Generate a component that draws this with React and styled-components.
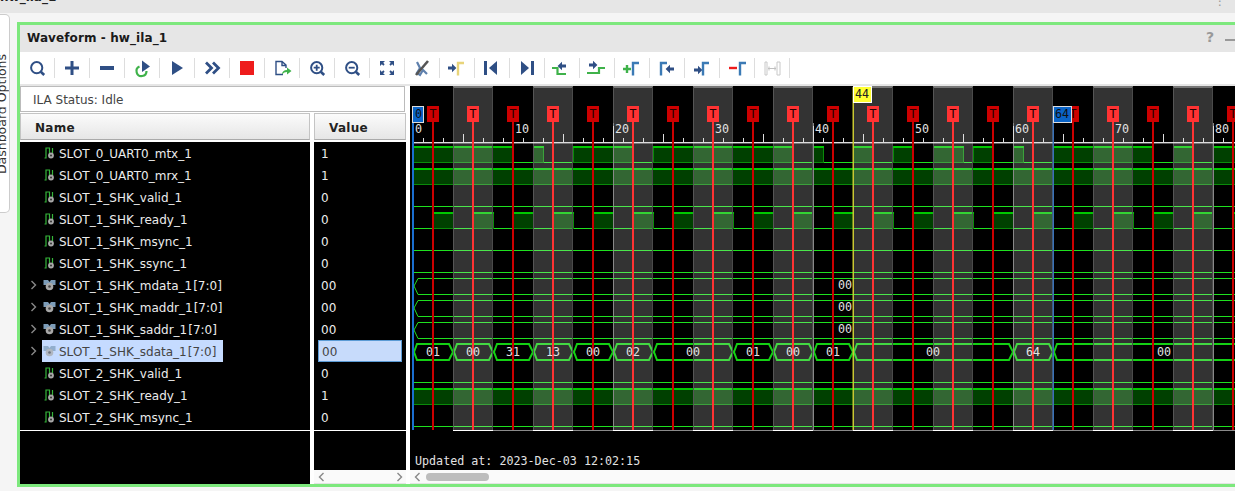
import React from 'react'
import styled, {createGlobalStyle} from 'styled-components'

const GlobalStyle = createGlobalStyle`
    html, body {
        margin: 0;
        padding: 0;
        background: #f5f5f5;
    }
`;

const NAVY = '#2f4f85';
const BLUE = '#3b7ab5';
const GREEN = '#3fb24a';

const Page = styled.div`
    width: 1235px;
    height: 491px;
    overflow: hidden;
    background: #f5f5f5;
    font-family: "DejaVu Sans", sans-serif;
    font-size: 12px;
`;

const TopStrip = styled.div`
    height: 13px;
    background: #e6e6e6;
    overflow: hidden;
    display: flex;
    justify-content: space-between;
`;

const StripTitle = styled.div`
    margin-top: -10px;
    font-weight: bold;
    font-size: 12px;
    line-height: 15px;
    color: #222;
`;

const Kebab = styled.div`
    margin: -6px 9px 0 0;
    color: #999;
    font-size: 12px;
    line-height: 14px;
`;

const Main = styled.div`
    display: flex;
    margin-top: 1px;
`;

const SideTab = styled.div`
    flex: none;
    width: 9px;
    height: 197px;
    background: #fff;
    border: 1px solid #ccc;
    border-left: none;
    border-top-right-radius: 5px;
    border-bottom-right-radius: 5px;
    overflow: hidden;
`;

const SideLabel = styled.div`
    writing-mode: vertical-rl;
    transform: rotate(180deg);
    margin: 39px 0 0 -4px;
    font-size: 12.5px;
    line-height: 12px;
    color: #333;
    white-space: nowrap;
`;

const Panel = styled.div`
    flex: none;
    margin: 8px 0 0 7px;
    width: 1216px;
    height: 459px;
    border: 3px solid #7de87d;
    display: flex;
    flex-direction: column;
    background: #fafafa;
`;

const TitleBar = styled.div`
    height: 27px;
    background: #e6e6e6;
    display: flex;
    justify-content: space-between;
    align-items: center;
    padding: 0 0 1px 7px;
    box-sizing: border-box;
`;

const PanelTitle = styled.div`
    font-weight: bold;
    font-size: 12px;
    letter-spacing: 0.1px;
    color: #1a1a1a;
`;

const WindowButtons = styled.div`
    display: flex;
    align-items: center;
    gap: 11px;
    margin: 0 1px 2px 0;
`;

const Help = styled.span`
    font-weight: bold;
    font-size: 14px;
    color: #999;
`;

const Minimize = styled.span`
    display: block;
    width: 10px;
    height: 2px;
    margin-top: 6px;
    background: #999;
`;

const Toolbar = styled.div`
    height: 32px;
    background: #fff;
    border-bottom: 2px solid #e6e6e6;
    display: flex;
    align-items: center;
`;

const ToolButton = styled.div`
    width: 34px;
    height: 20px;
    border-right: 1px solid #ddd;
    display: flex;
    justify-content: center;
    align-items: center;
`;

const Body = styled.div`
    flex: 1;
    display: flex;
    min-height: 0;
    background: #fff;
`;

const LeftPane = styled.div`
    flex: none;
    width: 386px;
    margin-right: 4px;
    display: flex;
    flex-direction: column;
`;

const StatusBox = styled.div`
    width: 371px;
    height: 24px;
    border: 1px solid #bbb;
    background: #fff;
    padding-left: 12px;
    margin-bottom: 1px;
    line-height: 27px;
    color: #444;
    font-size: 12px;
`;

const Columns = styled.div`
    flex: 1;
    display: flex;
    gap: 4px;
    min-height: 0;
`;

const Column = styled.div`
    width: ${p => p.$width}px;
    display: flex;
    flex-direction: column;
`;

const ColumnHeader = styled.div`
    height: 27px;
    box-sizing: border-box;
    border: 1px solid #c4c4c4;
    border-bottom-color: #aaa;
    background: linear-gradient(#fbfbfb, #e6e6e6);
    padding-left: ${p => p.$inset}px;
    line-height: 28px;
    font-weight: bold;
    font-size: 12px;
    letter-spacing: 0.3px;
    color: #222;
    margin-bottom: 2px;
`;

const Rows = styled.div`
    flex: 1;
    background: #000;
    display: flex;
    flex-direction: column;
    min-height: 0;
`;

const RowStack = styled.div`
    height: 288px;
    flex: none;
    border-bottom: 1px solid #fff;
`;

const NameRow = styled.div`
    height: 22px;
    display: flex;
    align-items: stretch;
    padding-left: 10px;
`;

const Expander = styled.div`
    width: 12px;
    flex: none;
    display: flex;
    align-items: center;
`;

const NameChip = styled.div`
    display: flex;
    align-items: center;
    width: ${p => (p.$selected ? '181px' : 'auto')};
    padding-left: ${p => (p.$bus ? '1px' : '2px')};
    box-sizing: border-box;
    background: ${p => (p.$selected ? '#c5dbff' : 'transparent')};
`;

const SignalName = styled.span`
    margin-left: 3px;
    padding-top: 2px;
    font-size: 12px;
    line-height: 20px;
    white-space: nowrap;
    color: ${p => (p.$selected ? '#444' : '#ececec')};
`;

const Range = styled.span`
    margin-left: 1px;
`;

const ValueRow = styled.div`
    height: 22px;
    box-sizing: border-box;
    margin-left: ${p => (p.$selected ? '4px' : '0')};
    width: ${p => (p.$selected ? '84px' : 'auto')};
    padding-left: ${p => (p.$selected ? '3px' : '7px')};
    padding-top: ${p => (p.$selected ? '1px' : '2px')};
    background: ${p => (p.$selected ? '#c7dbfb' : 'transparent')};
    border: ${p => (p.$selected ? '1px solid #5b9bd5' : 'none')};
    line-height: 20px;
    font-size: 12px;
    color: ${p => (p.$selected ? '#444' : '#ececec')};
`;

const ScrollBar = styled.div`
    flex: none;
    height: 14px;
    box-sizing: border-box;
    background: #fafafa;
    border-bottom: 1px solid #e4e4e4;
    display: flex;
    align-items: center;
    gap: 5px;
    padding: 0 3px 0 4px;
    justify-content: ${p => (p.$spread ? 'space-between' : 'flex-start')};
`;

const ScrollThumb = styled.div`
    width: 63px;
    height: 8px;
    border-radius: 4px;
    background: #bdbdbd;
`;

const WavePane = styled.div`
    flex: 1;
    display: flex;
    flex-direction: column;
    min-width: 0;
`;

const WaveSvg = styled.svg`
    display: block;
    flex: none;
    background: #000;
`;

const WaveText = styled.text`
    font-family: "DejaVu Sans Mono", monospace;
    font-size: 11.7px;
    fill: ${p => p.$fill || '#e2e2e2'};
`;

// toolbar icons, 20x20 each
const Icon = ({children}) => <svg width="20" height="20" viewBox="0 0 20 20" fill="none">{children}</svg>;

const Lens = ({children}) => (
    <Icon>
        <circle cx="9.7" cy="9.7" r="5.6" stroke={NAVY} strokeWidth="2"/>
        <path d="M13.8 13.8L17.2 17" stroke={NAVY} strokeWidth="2.6"/>
        {children}
    </Icon>
);

const Edge = ({x, color = BLUE}) => <path d={`M${x} 17.5V5H${x + 6}`} stroke={color} strokeWidth="2.4"/>;
const ArrowRight = ({x, y}) => <path d={`M${x} ${y - 1.6}h4v-2.6l4.4 4.2l-4.4 4.2v-2.6h-4z`} fill={NAVY}/>;
const ArrowLeft = ({x, y}) => <path d={`M${x} ${y - 1.6}h-4v-2.6l-4.4 4.2l4.4 4.2v-2.6h4z`} fill={NAVY}/>;

const toolIcons = [
    <Lens />,
    <Icon><path d="M3 10h14M10 3v14" stroke={NAVY} strokeWidth="3"/></Icon>,
    <Icon><path d="M3 10h14" stroke={NAVY} strokeWidth="4"/></Icon>,
    <Icon>
        <path d="M7.5 8.5a5 5 0 1 0 7 4.5" stroke={GREEN} strokeWidth="2.2"/>
        <path d="M10 2.500L18 8.500L10 14z" fill={NAVY}/>
    </Icon>,
    <Icon><path d="M5 3l11 7l-11 7z" fill={NAVY}/></Icon>,
    <Icon><path d="M4 4.500l5.500 5.500l-5.500 5.500M11 4.500l5.500 5.500l-5.500 5.500" stroke={NAVY} strokeWidth="2.800"/></Icon>,
    <Icon><rect x="3" y="3" width="14" height="14" fill="#ee1c1c"/></Icon>,
    <Icon>
        <path d="M14 10V7L10 3.500H4v13h7M10 3.500v4h4" stroke={NAVY} strokeWidth="1.400"/>
        <path d="M10 16.500c0-3 2-4.500 5-4.500V9.500l4.500 3.500L15 16.500v-2.500c-2 0-3.500 .8-5 2.500z" fill={GREEN}/>
    </Icon>,
    <Lens><path d="M6.700 9.700h6M9.700 6.700v6" stroke={NAVY} strokeWidth="1.800"/></Lens>,
    <Lens><path d="M6.700 9.700h6" stroke={NAVY} strokeWidth="1.800"/></Lens>,
    <Icon>
        <path d="M3 8V3h5zM17 8V3h-5zM3 12v5h5zM17 12v5h-5z" fill={NAVY}/>
        <path d="M4 4l3 3M16 4l-3 3M4 16l3-3M16 16l-3-3" stroke={NAVY} strokeWidth="1.800"/>
    </Icon>,
    <Icon>
        <path d="M5 4l3 6l-3 5l3 2l3-5l4 4" stroke="#5f80ad" strokeWidth="2.200"/>
        <path d="M4 17L16 3" stroke="#555" strokeWidth="2.600"/>
    </Icon>,
    <Icon><ArrowRight x={1} y={10}/><Edge x={11} color="#e8d47a"/></Icon>,
    <Icon>
        <rect x="2" y="3" width="3" height="14" fill={NAVY}/>
        <path d="M15 3v14l-8-7z" fill={NAVY}/>
    </Icon>,
    <Icon>
        <path d="M4 3v14l8-7z" fill={NAVY}/>
        <rect x="14" y="3" width="3" height="14" fill={NAVY}/>
    </Icon>,
    <Icon>
        <path d="M0 10h5.500v6H14" stroke={GREEN} strokeWidth="2.200"/>
        <ArrowLeft x={14} y={8}/>
    </Icon>,
    <Icon>
        <path d="M0 15h12v-5h6" stroke={GREEN} strokeWidth="2.200"/>
        <ArrowRight x={2} y={7}/>
    </Icon>,
    <Icon><path d="M1 11h8M5 7v8" stroke={GREEN} strokeWidth="2.400"/><Edge x={11}/></Icon>,
    <Icon><Edge x={4}/><ArrowLeft x={17} y={11}/></Icon>,
    <Icon><ArrowRight x={2} y={12}/><Edge x={11}/></Icon>,
    <Icon><path d="M2 10h8" stroke="#ee1c1c" strokeWidth="2.400"/><Edge x={13}/></Icon>,
    <Icon>
        <path d="M3 4h2v13H3zM15 4h3v13h-3z" stroke="#c8c8c8" strokeWidth="1"/>
        <path d="M6 10.500h8M7 8.500v4M13 8.500v4" stroke="#c0c0c0"/>
    </Icon>,
];

const SignalIcon = () => (
    <svg width="12" height="14" viewBox="0 0 12 14" fill="none">
        <path d="M0.500 12h1.500V2h3.500v5.500M8.500 2v5.500" stroke="#35b53a" strokeWidth="1.200"/>
        <circle cx="7" cy="9.500" r="2.900" fill="#a8a8a8"/>
        <circle cx="7" cy="9.500" r="1" fill="#333"/>
    </svg>
);

const BusIcon = ({selected}) => (
    <svg width="13" height="14" viewBox="0 0 13 14" fill="none" opacity={selected ? 0.7 : 1}>
        <path d="M0.500 2h4.500l1.500 2l1.500-2h4.500v5h-12z" fill="#7c9cb8"/>
        <circle cx="6.500" cy="8.500" r="3.800" fill="#a8a8a8"/>
        <circle cx="6.500" cy="8.500" r="1.300" fill="#444"/>
    </svg>
);

const Chevron = ({left, color = '#888', size = 7}) => (
    <svg width={size} height={size + 3} viewBox="0 0 7 10" fill="none">
        <path d={left ? 'M5.500 1L1.500 5l4 4' : 'M1.500 1l4 4l-4 4'} stroke={color} strokeWidth="1.400"/>
    </svg>
);

const signals = [
    {name: 'SLOT_0_UART0_mtx_1', value: '1'},
    {name: 'SLOT_0_UART0_mrx_1', value: '1'},
    {name: 'SLOT_1_SHK_valid_1', value: '0'},
    {name: 'SLOT_1_SHK_ready_1', value: '0'},
    {name: 'SLOT_1_SHK_msync_1', value: '0'},
    {name: 'SLOT_1_SHK_ssync_1', value: '0'},
    {name: 'SLOT_1_SHK_mdata_1', range: '[7:0]', value: '00'},
    {name: 'SLOT_1_SHK_maddr_1', range: '[7:0]', value: '00'},
    {name: 'SLOT_1_SHK_saddr_1', range: '[7:0]', value: '00'},
    {name: 'SLOT_1_SHK_sdata_1', range: '[7:0]', value: '00', selected: true},
    {name: 'SLOT_2_SHK_valid_1', value: '0'},
    {name: 'SLOT_2_SHK_ready_1', value: '1'},
    {name: 'SLOT_2_SHK_msync_1', value: '0'},
];

// waveform data, x values are page pixels (10px per sample, sample 0 at 413)
const END = 1240;
const range = (n, f) => Array.from({length: n}, (_, i) => f(i));

const digital = [
    [[413, 513], [533, 543], [573, 633], [653, 793], [813, 823], [853, 873], [893, 913], [933, 963],
        [973, 993], [1013, 1023], [1053, 1153], [1173, 1193], [1213, END]],
    [[413, END]],
    [],
    range(21, i => [433 + 40 * i, 453 + 40 * i]),
    [],
    [],
];
const lateRows = {10: [], 11: [[413, END]], 12: []};

const sdata = [
    [413, 453, '01'], [453, 493, '00'], [493, 533, '31'], [533, 573, '13'], [573, 613, '00'],
    [613, 653, '02'], [653, 733, '00'], [733, 773, '01'], [773, 813, '00'], [813, 853, '01'],
    [853, 1013, '00'], [1013, 1053, '64'], [1053, 1275, '00'],
];

const DigitalRow = ({row, highs}) => {
    const top = 146 + row * 22;
    const bottom = top + 16;
    return (
        <g>
            <path d={`M414 ${bottom + 0.5}H${END}`} stroke="#1fe01f"/>
            {highs.map(([a, b]) => (
                <g key={a}>
                    <rect x={a + 0.5} y={top + 0.5} width={b - a} height={16} fill="#004000" stroke="#0a8a0a"/>
                    <path d={`M${a} ${top + 1}H${b + 1}`} stroke="#00c800" strokeWidth="2"/>
                </g>
            ))}
        </g>
    );
};

const Waveform = () => (
    <WaveSvg width="825" height="384" viewBox="410 86 825 384" shapeRendering="crispEdges">
        {digital.map((highs, i) => <DigitalRow key={i} row={i} highs={highs}/>)}
        {Object.keys(lateRows).map(r => <DigitalRow key={r} row={Number(r)} highs={lateRows[r]}/>)}

        {[6, 7, 8].map(r => {
            const top = 146 + r * 22;
            return (
                <path key={r} shapeRendering="auto" fill="none" stroke="#1fe01f"
                    d={`M${END} ${top + 0.5}H418L414 ${top + 8}L418 ${top + 16.5}H${END}`}/>
            );
        })}
        {sdata.map(([a, b]) => (
            <path key={a} shapeRendering="auto" fill="none" stroke="#14d014" strokeWidth="2"
                d={`M${a + 1} 352L${a + 4} 344H${b - 4}L${b} 352L${b - 4} 360H${a + 4}z`}/>
        ))}

        {/* shaded sample bands sit over the traces */}
        {range(10, i => (
            <g key={i}>
                <rect x={453 + 80 * i} y={86} width={40} height={344} fill="rgba(255,255,255,0.2)"/>
                <rect x={453 + 80 * i} y={86} width={40} height={1.500} fill="#777"/>
                <rect x={453 + 80 * i} y={87} width={1} height={343} fill="#555"/>
                <rect x={492 + 80 * i} y={87} width={1} height={343} fill="#4a4a4a"/>
                <rect x={453 + 80 * i} y={430} width={40} height={1} fill="#fff"/>
                <rect x={493 + 80 * i} y={430} width={40} height={1} fill="#8a8a8a"/>
            </g>
        ))}
        {[613, 813, 1013, 1213].map(x => <rect key={x} x={x} y={123} width={1} height={307} fill="#888"/>)}

        {/* ruler */}
        <rect x={413} y={142} width={822} height={1.400} fill="#ddd" shapeRendering="auto"/>
        {range(83, i => {
            const x = 413 + 10 * i;
            if (i % 10 === 0) return <rect key={i} x={x} y={126} width={1} height={16} fill="#ddd"/>;
            if (i % 5 === 0) return <rect key={i} x={x} y={134} width={1} height={8} fill="#ddd"/>;
            if (i % 2 === 1) return <rect key={i} x={x} y={138} width={1} height={4} fill="#ddd"/>;
            return null;
        })}
        {range(9, i => <WaveText key={i} x={415 + 100 * i} y={133}>{i * 10}</WaveText>)}

        {/* trigger markers */}
        {range(21, i => {
            const x = 433 + 40 * i;
            const color = i % 2 ? '#ff3333' : '#cc0000';
            return (
                <g key={i}>
                    <rect x={x - 1} y={122} width={2} height={308} fill={color}/>
                    <rect x={x - 6} y={106} width={12} height={16} fill={color}/>
                    <WaveText x={x - 3.500} y={118} $fill="#200">T</WaveText>
                </g>
            );
        })}

        {/* cursors */}
        <rect x={852.500} y={87} width={1.500} height={343} fill="#c8c832" shapeRendering="auto"/>
        <rect x={853} y={86} width={18} height={16} fill="#ffff33" stroke="#fff"/>
        <WaveText x={855} y={98} $fill="#222">44</WaveText>
        <rect x={1052.500} y={106} width={1.500} height={324} fill="#3a72b8" shapeRendering="auto"/>
        <rect x={1053} y={106} width={18} height={16} fill="#0a64c8" stroke="#ddd"/>
        <WaveText x={1055} y={118} $fill="#111">64</WaveText>
        <rect x={412} y={122} width={2} height={308} fill="#1a6fd0"/>
        <rect x={412.500} y={106} width={11} height={16} fill="#0a64c8" stroke="#ddd"/>
        <WaveText x={415} y={118} $fill="#111">0</WaveText>

        {/* bus values */}
        {[285, 307, 329].map(y => <WaveText key={y} x={838} y={y + 4}>00</WaveText>)}
        {sdata.map(([a, b, label]) => {
            const mid = b > END ? 1164 : (a + b) / 2;
            return <WaveText key={a} x={mid} y={356} textAnchor="middle">{label}</WaveText>;
        })}

        <WaveText x={415} y={465}>Updated at: 2023-Dec-03 12:02:15</WaveText>
    </WaveSvg>
);

class App extends React.Component{
    render(){
        return(
            <Page>
                <GlobalStyle />
                <TopStrip>
                    <StripTitle>hw_ila_1</StripTitle>
                    <Kebab>⋮</Kebab>
                </TopStrip>
                <Main>
                    <SideTab>
                        <SideLabel>Dashboard Options</SideLabel>
                    </SideTab>
                    <Panel>
                        <TitleBar>
                            <PanelTitle>Waveform - hw_ila_1</PanelTitle>
                            <WindowButtons>
                                <Help>?</Help>
                                <Minimize />
                            </WindowButtons>
                        </TitleBar>
                        <Toolbar>
                            {toolIcons.map((icon, i) => <ToolButton key={i}>{icon}</ToolButton>)}
                        </Toolbar>
                        <Body>
                            <LeftPane>
                                <StatusBox>ILA Status: Idle</StatusBox>
                                <Columns>
                                    <Column $width={290}>
                                        <ColumnHeader $inset={14}>Name</ColumnHeader>
                                        <Rows>
                                            <RowStack>
                                                {signals.map(s => (
                                                    <NameRow key={s.name}>
                                                        <Expander>{s.range && <Chevron />}</Expander>
                                                        <NameChip $selected={s.selected} $bus={!!s.range}>
                                                            {s.range ? <BusIcon selected={s.selected}/> : <SignalIcon />}
                                                            <SignalName $selected={s.selected}>
                                                                {s.name}
                                                                {s.range && <Range>{s.range}</Range>}
                                                            </SignalName>
                                                        </NameChip>
                                                    </NameRow>
                                                ))}
                                            </RowStack>
                                        </Rows>
                                    </Column>
                                    <Column $width={92}>
                                        <ColumnHeader $inset={14}>Value</ColumnHeader>
                                        <Rows>
                                            <RowStack>
                                                {signals.map(s => (
                                                    <ValueRow key={s.name} $selected={s.selected}>{s.value}</ValueRow>
                                                ))}
                                            </RowStack>
                                        </Rows>
                                        <ScrollBar $spread>
                                            <Chevron left />
                                            <Chevron />
                                        </ScrollBar>
                                    </Column>
                                </Columns>
                            </LeftPane>
                            <WavePane>
                                <Waveform />
                                <ScrollBar>
                                    <Chevron left />
                                    <ScrollThumb />
                                </ScrollBar>
                            </WavePane>
                        </Body>
                    </Panel>
                </Main>
            </Page>
        )
    }
}

export default App;
